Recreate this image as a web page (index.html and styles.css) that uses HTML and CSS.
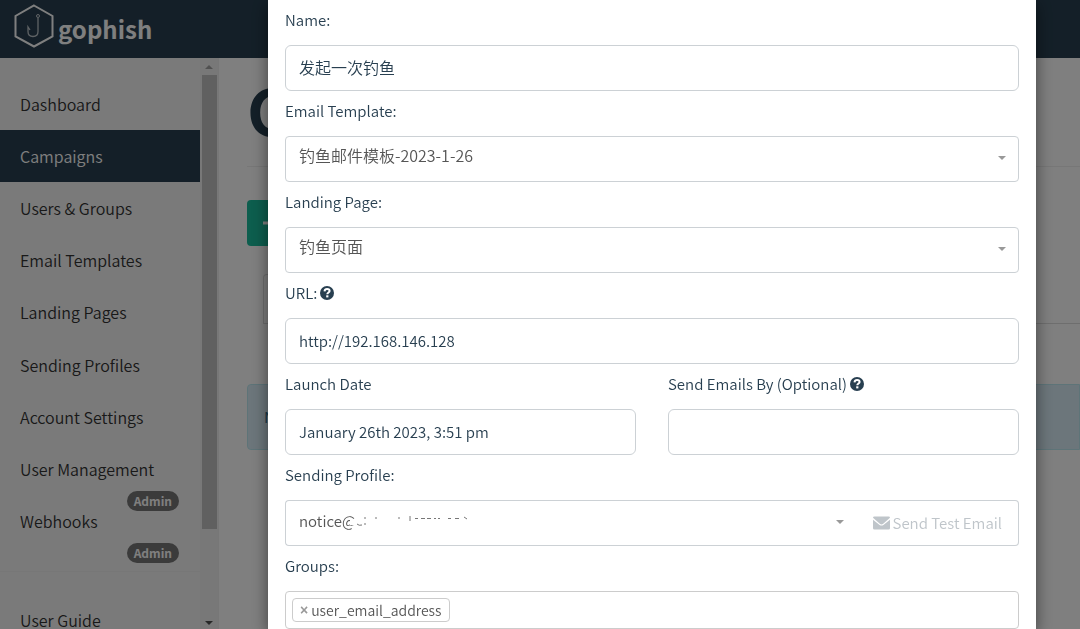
FILE: index.html
```html
<!DOCTYPE html>
<html lang="en">
<head>
    <meta charset="UTF-8">
    <meta name="viewport" content="width=device-width, initial-scale=1.0">
    <title>Campaigns - Gophish</title>
    <link rel="stylesheet" href="styles.css">
</head>
<body>

    <header class="navbar">
        <svg class="logo" viewBox="0 0 40 44" aria-hidden="true">
            <path d="M20 1.500 38.500 12v20.500L20 42.500 1.500 32.500V12z" fill="none" stroke="#fff" stroke-width="2"/>
            <circle cx="24" cy="12" r="1.500" fill="none" stroke="#fff" stroke-opacity=".7"/>
            <path d="M24 14v13.500c0 3-2 5-5 5s-5-2-5-5V23l2 3" fill="none" stroke="#fff" stroke-opacity=".7" stroke-width="1.300"/>
        </svg>
        <a class="brand" href="#">gophish</a>
    </header>

    <div class="page">
        <nav class="sidebar">
            <div class="menu">
                <ul class="nav-main">
                    <li><a href="#">Dashboard</a></li>
                    <li class="active"><a href="#">Campaigns</a></li>
                    <li><a href="#">Users &amp; Groups</a></li>
                    <li><a href="#">Email Templates</a></li>
                    <li><a href="#">Landing Pages</a></li>
                    <li><a href="#">Sending Profiles</a></li>
                    <li><a href="#">Account Settings</a></li>
                    <li><a href="#">User Management<span class="badge">Admin</span></a></li>
                    <li><a href="#">Webhooks<span class="badge">Admin</span></a></li>
                </ul>
                <ul class="nav-help">
                    <li><a href="#">User Guide</a></li>
                </ul>
            </div>
            <div class="scrollbar">
                <span class="arrow-up"></span>
                <span class="thumb"></span>
                <span class="arrow-down"></span>
            </div>
        </nav>

        <main class="main">
            <h1>Campaigns</h1>
            <button type="button" class="btn-new">
                <svg viewBox="0 0 14 14" width="14" height="14" aria-hidden="true"><path d="M5.500 0h3v5.500H14v3H8.500V14h-3V8.500H0v-3h5.500z" fill="#fff"/></svg>
                New Campaign
            </button>
            <div class="tabs"><a class="tab" href="#">Active Campaigns</a></div>
            <div class="alert">No campaigns created yet. Let's create one!</div>
        </main>
    </div>

    <div class="modal-backdrop">
        <form class="modal">
            <div class="field">
                <label for="name">Name:</label>
                <input type="text" id="name" class="control cjk" value="发起一次钓鱼">
            </div>
            <div class="field">
                <label for="template">Email Template:</label>
                <div class="select-wrap">
                    <select id="template" class="control cjk"><option>钓鱼邮件模板-2023-1-26</option></select>
                </div>
            </div>
            <div class="field">
                <label for="page">Landing Page:</label>
                <div class="select-wrap">
                    <select id="page" class="control cjk"><option>钓鱼页面</option></select>
                </div>
            </div>
            <div class="field">
                <label for="url">URL:
                    <svg class="help" viewBox="0 0 14 14" aria-hidden="true"><circle cx="7" cy="7" r="7" fill="#283f50"/><path d="M4.500 5.300C4.700 3.800 5.600 3 7.100 3s2.500.8 2.500 2c0 1.500-2.300 1.600-2.300 3.200" fill="none" stroke="#fff" stroke-width="2"/><path d="M6.200 9.300h2.200v2.100H6.200z" fill="#fff"/></svg>
                </label>
                <input type="text" id="url" class="control" value="http://192.168.146.128">
            </div>
            <div class="row">
                <div class="field">
                    <label for="launch">Launch Date</label>
                    <input type="text" id="launch" class="control" value="January 26th 2023, 3:51 pm">
                </div>
                <div class="field">
                    <label for="sendby">Send Emails By (Optional)
                        <svg class="help" viewBox="0 0 14 14" aria-hidden="true"><circle cx="7" cy="7" r="7" fill="#283f50"/><path d="M4.500 5.300C4.700 3.800 5.600 3 7.100 3s2.500.8 2.500 2c0 1.500-2.300 1.600-2.300 3.200" fill="none" stroke="#fff" stroke-width="2"/><path d="M6.200 9.300h2.200v2.100H6.200z" fill="#fff"/></svg>
                    </label>
                    <input type="text" id="sendby" class="control">
                </div>
            </div>
            <div class="field">
                <label for="profile">Sending Profile:</label>
                <div class="input-group">
                    <div class="select-wrap">
                        <select id="profile" class="control"><option>notice@</option></select>
                        <!-- rest of the address is wiped out -->
                        <svg class="redacted" viewBox="0 0 130 18" aria-hidden="true">
                            <path d="M9 6 15 4v8l-6-1z" fill="#fff"/>
                            <path d="M16 10q2 2 5 1M24 3v2M24 9v2M34 4h2M57 4h2M69 2v5M74 4.500h3M80 4.500h4M86 4.500h4M93 4.500h2M97 4.500h2M107 4.500h3M114 4.500h4M123 3l3 2" fill="none" stroke="#777"/>
                        </svg>
                    </div>
                    <button type="button" class="btn-test" disabled>
                        <svg viewBox="0 0 18 14" width="17" height="14" aria-hidden="true"><path d="M1.500 0h15Q18 0 18 1.500L10.500 8Q9 9 7.500 8L0 1.500Q0 0 1.500 0zM0 3.500 7 9q2 1.500 4 0l7-5.500v9q0 1.500-1.500 1.500h-15Q0 14 0 12.500z" fill="#bfc5ca"/></svg>
                        Send Test Email
                    </button>
                </div>
            </div>
            <div class="field">
                <label for="groups">Groups:</label>
                <div class="tag-box">
                    <span class="tag"><button type="button" class="tag-remove" aria-label="Remove">×</button>user_email_address</span>
                    <input type="text" id="groups" class="tag-input">
                </div>
            </div>
        </form>
    </div>

</body>
</html>
```
FILE: styles.css
```css
* {
    box-sizing: border-box;
}
body {
    margin: 0;
    height: 100vh;
    overflow: hidden;
    display: flex;
    flex-direction: column;
    font-family: "Noto Sans CJK SC", sans-serif;
    font-size: 15px;
    line-height: 20px;
    color: #283f50;
    background-color: #fff;
}
button,
input,
select {
    font: inherit;
    color: inherit;
}
a {
    color: inherit;
    text-decoration: none;
}
ul {
    list-style: none;
    margin: 0;
    padding: 0;
}

/* Top bar */
.navbar {
    flex: none;
    display: flex;
    align-items: center;
    gap: 4px;
    height: 58px;
    padding: 0 14px 6px;
    background-color: #283f50;
    color: #fff;
}
.logo {
    width: 40px;
    height: 44px;
}
.brand {
    padding-top: 6px;
    font-size: 24px;
    font-weight: bold;
}

/* Sidebar */
.page {
    flex: 1;
    min-height: 0;
    display: flex;
}
.sidebar {
    flex: none;
    display: flex;
    width: 219px;
    background-color: #f5f5f5;
    border-right: 1px solid #eee;
}
.menu {
    flex: 1;
    padding-top: 20px;
    overflow: hidden;
    color: #333;
    font-size: 16px;
    font-weight: 350;
}
.nav-main {
    display: grid;
    grid-template-rows: repeat(9, 1fr);
    height: 470px;
}
.menu a {
    position: relative;
    display: flex;
    align-items: center;
    height: 100%;
    padding: 0 20px 1px;
}
.menu .active {
    background-color: #283f50;
    color: #fff;
}
.badge {
    position: absolute;
    right: 21px;
    top: 100%;
    margin-top: -5px;
    padding: 0 7px;
    border-radius: 10px;
    background-color: #777;
    color: #fff;
    font-size: 12px;
    font-weight: bold;
}
.nav-help {
    margin-top: 23px;
    padding-top: 22px;
    border-top: 1px solid #eee;
}
.nav-help li {
    height: 52px;
}
.scrollbar {
    display: flex;
    flex-direction: column;
    align-items: center;
    width: 18px;
    padding: 7px 0 4px;
    background-color: #f1f1f1;
}
.thumb {
    width: 15px;
    height: 454px;
    margin: 6px 0 auto;
    background-color: #c1c1c1;
}
.arrow-up,
.arrow-down {
    border: 4px solid transparent;
}
.arrow-up {
    border-top: 0;
    border-bottom-color: #a3a3a3;
}
.arrow-down {
    border-bottom: 0;
    border-top-color: #505050;
}

/* Page content behind the dialog */
.main {
    flex: 1;
    min-width: 0;
    padding: 10px 0 0 28px;
}
h1 {
    margin: 0 0 33px;
    padding-bottom: 18px;
    border-bottom: 1px solid #eee;
    font-size: 64px;
    font-weight: bold;
    line-height: 80px;
}
.btn-new {
    display: flex;
    align-items: center;
    gap: 4px;
    height: 46px;
    padding: 0 16px;
    border: 0;
    border-radius: 4px;
    background-color: #1abc9c;
    color: #fff;
}
.tabs {
    display: flex;
    margin: 28px 0 60px 16px;
    border-bottom: 1px solid #ddd;
}
.tab {
    padding: 14px 16px;
    border: 1px solid #ddd;
    border-bottom: 0;
    border-radius: 4px 4px 0 0;
}
.alert {
    padding: 22px 16px;
    border: 1px solid #bce8f1;
    border-radius: 4px 0 0 4px;
    background-color: #d9edf7;
    color: #31708f;
}

/* Dialog */
.modal-backdrop {
    position: fixed;
    inset: 0;
    overflow: hidden;
    padding: 0 44px 0 268px;
    background-color: rgba(0, 0, 0, 0.5);
}
.modal {
    min-height: 100%;
    padding: 0 17px;
    background-color: #fff;
    box-shadow: 0 5px 15px rgba(0, 0, 0, 0.5);
    font-weight: 350;
}
.field label {
    display: flex;
    align-items: center;
    gap: 3px;
    height: 45px;
    padding-bottom: 6px;
}
.help {
    width: 14px;
    height: 14px;
}
.control {
    display: block;
    width: 100%;
    height: 46px;
    padding: 0 13px 2px;
    border: 1px solid #ccd1d5;
    border-radius: 6px;
    background-color: #fff;
    outline: 0;
}
.control.cjk {
    font-size: 16px;
}
.select-wrap {
    position: relative;
}
.select-wrap::after {
    content: "";
    position: absolute;
    right: 13px;
    top: 20px;
    border: 4px solid transparent;
    border-top-color: #999;
    border-bottom: 0;
}
select.control {
    appearance: none;
    padding-bottom: 5px;
    border-radius: 4px;
    color: #555;
}
select.cjk {
    padding-bottom: 8px;
}
.row {
    display: grid;
    grid-template-columns: 1fr 1fr;
    gap: 32px;
}
.input-group {
    display: flex;
}
.input-group .select-wrap {
    flex: 1;
}
.input-group select.control {
    border-right: 0;
    border-radius: 4px 0 0 4px;
}
.redacted {
    position: absolute;
    left: 56px;
    top: 14px;
    width: 130px;
    height: 18px;
}
.btn-test {
    display: flex;
    align-items: center;
    gap: 3px;
    padding: 0 16px;
    border: 1px solid #ccd1d5;
    border-left: 0;
    border-radius: 0 4px 4px 0;
    background-color: #fff;
    color: #bfc5ca;
}
.tag-box {
    display: flex;
    padding: 6px;
    border: 1px solid #ccc;
    border-radius: 4px;
}
.tag {
    display: flex;
    align-items: center;
    gap: 3px;
    height: 24px;
    padding: 0 7px 1px;
    border: 1px solid #ccc;
    border-radius: 4px;
    color: #555;
    font-size: 14px;
}
.tag-remove {
    padding: 0;
    border: 0;
    background: none;
    color: #999;
    font-family: "Liberation Sans", sans-serif;
    font-weight: bold;
}
.tag-input {
    flex: 1;
    min-width: 0;
    padding: 0;
    border: 0;
    outline: 0;
}
```
